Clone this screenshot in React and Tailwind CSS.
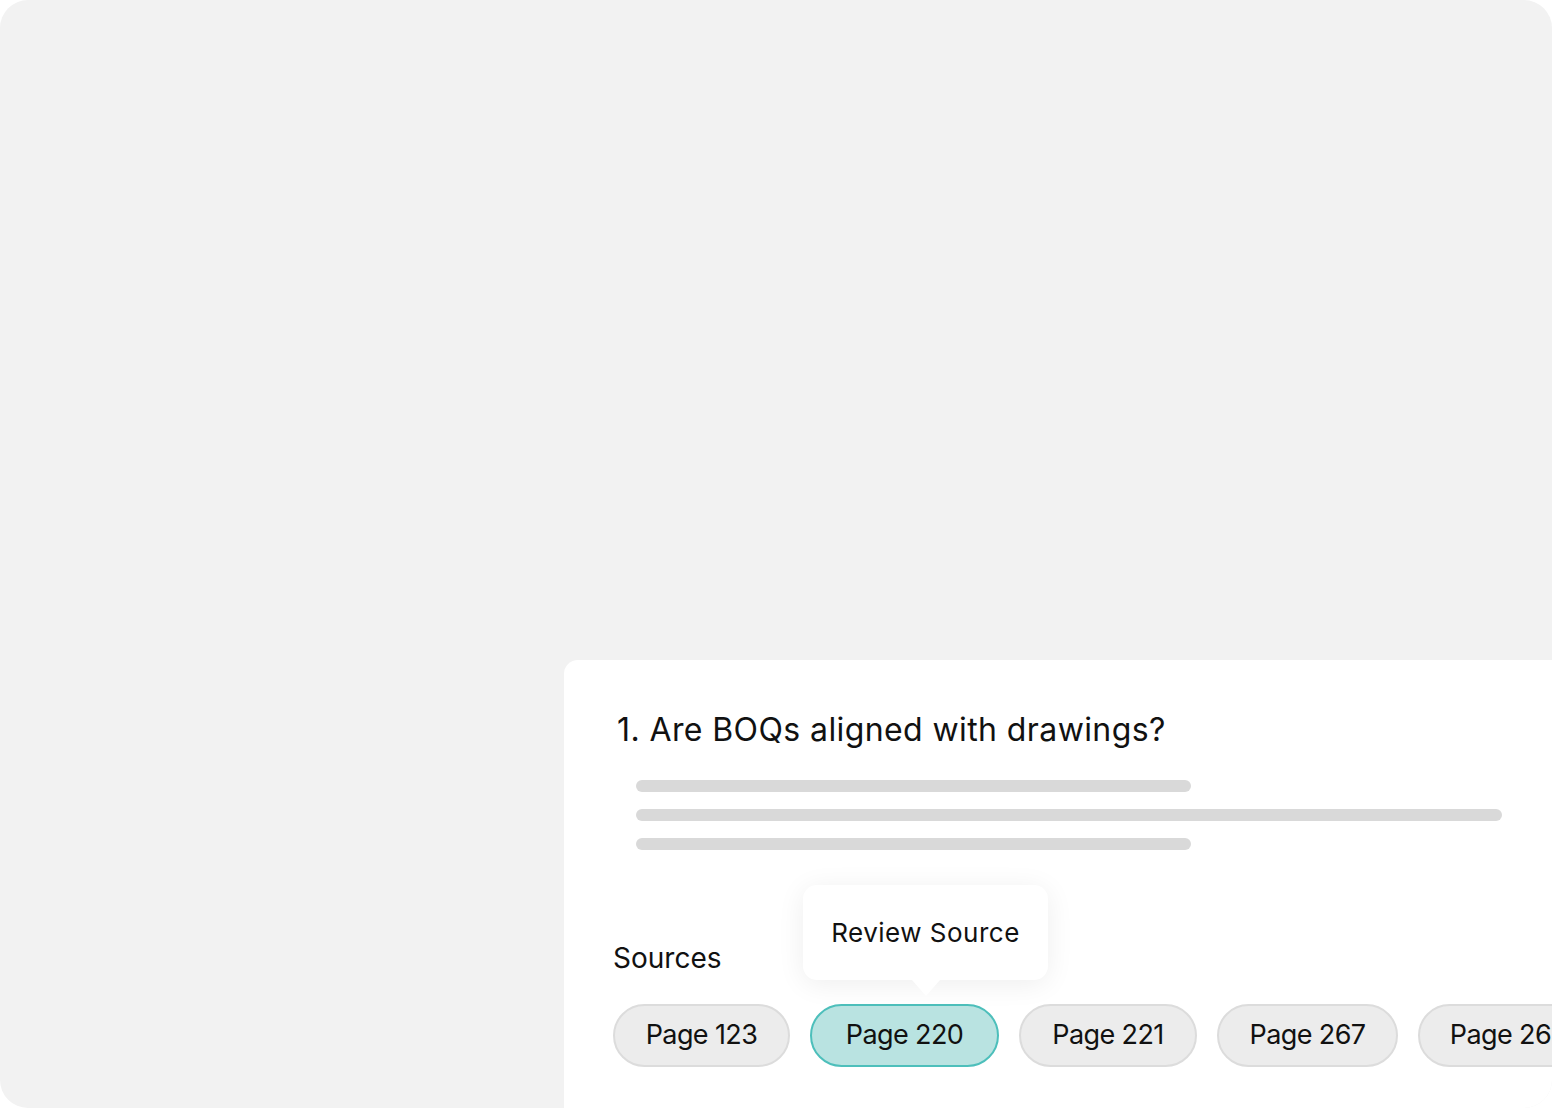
import React from 'react';

const pages = [
  { label: 'Page 123', w: 'w-[177px]' },
  { label: 'Page 220', w: 'w-[189px]' },
  { label: 'Page 221', w: 'w-[178px]' },
  { label: 'Page 267', w: 'w-[181px]' },
  { label: 'Page 268', w: 'w-[181px]' },
];
const active = 'Page 220';

function SourcePill({ label, width, selected }) {
  return (
    <div className="relative shrink-0">
      {selected && (
        <div className="absolute bottom-full left-[-7px] mb-[24px] z-10">
          <div className="w-[245px] h-[95px] rounded-[14px] bg-white shadow-[0_4px_28px_rgba(0,0,0,0.07)] flex items-center justify-center text-[26px] tracking-[0.5px] text-[#111]">
            Review Source
          </div>
          <div className="absolute left-1/2 -translate-x-1/2 top-full w-0 h-0 border-x-[14px] border-t-[16px] border-x-transparent border-t-white" />
        </div>
      )}
      <div
        className={
          (selected
            ? 'border-[#4dbfbb] bg-[#b9e3e1] '
            : 'border-[#dcdcdc] bg-[#ececec] ') +
          width +
          ' h-[63px] rounded-full border-2 flex items-center justify-center whitespace-nowrap text-[27px] tracking-[-0.6px] text-[#111]'
        }
      >
        {label}
      </div>
    </div>
  );
}

export default function App() {
  return (
    <div className="w-full h-[1108px] bg-white font-['Inter',sans-serif]">
      <div className="h-full rounded-[28px] bg-[#f2f2f2] overflow-hidden flex flex-col pt-[660px] pl-[564px]">
        {/* Question card */}
        <div className="flex-1 bg-white rounded-tl-[14px] pl-[49px] pt-[50px] overflow-hidden">
          <h2 className="ml-[4px] text-[32px] leading-[40px] text-[#111] tracking-[0.4px]">
            1. Are BOQs aligned with drawings?
          </h2>

          {/* answer placeholder lines */}
          <div className="ml-[23px] mt-[30px] flex flex-col gap-[17px]">
            <div className="w-[555px] h-[12px] rounded-full bg-[#d9d9d9]" />
            <div className="w-[866px] h-[12px] rounded-full bg-[#d9d9d9]" />
            <div className="w-[555px] h-[12px] rounded-full bg-[#d9d9d9]" />
          </div>

          <div className="mt-[91px] text-[28px] leading-[34px] text-[#111]">Sources</div>

          <div className="mt-[29px] flex gap-[20px]">
            {pages.map((p) => (
              <SourcePill key={p.label} label={p.label} width={p.w} selected={p.label === active} />
            ))}
          </div>
        </div>
      </div>
    </div>
  );
}
